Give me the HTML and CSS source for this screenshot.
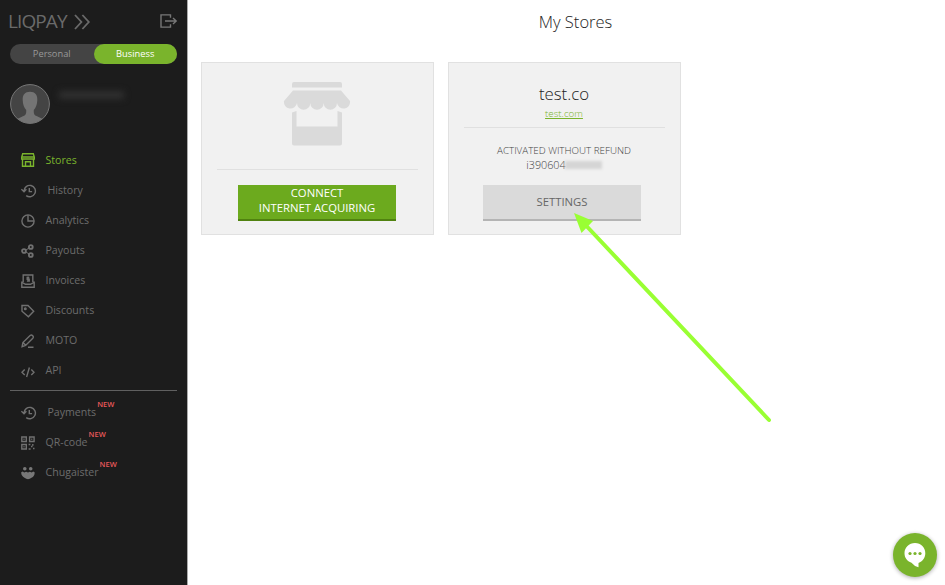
FILE: index.html
```html
<!DOCTYPE html>
<html lang="en">
<head>
<meta charset="utf-8">
<title>My Stores</title>
<link rel="stylesheet" href="styles.css">
</head>
<body>
<svg class="symbols" aria-hidden="true">
  <symbol id="history" viewBox="0 0 16 14"><path d="M3 7a5.7 5.7 0 1 1 2.2 4.6M.4 5.2 3 7.8 5.4 5.2M8.3 4v3.6h2.8"/></symbol>
</svg>
<div class="app">
  <aside class="sidebar">
    <header class="brand">
      <span class="logo">LIQPAY</span>
      <svg class="chevrons" width="17" height="16" viewBox="0 0 17 16"><path d="M1 1l6.4 7L1 15M8.4 1l6.4 7-6.4 7"/></svg>
      <svg class="logout" width="18" height="14" viewBox="0 0 18 14"><path d="M10.5 3.8V.9H1v12.2h9.5v-2.900M5 7h11M13 4l3.2 3L13 10"/></svg>
    </header>
    <div class="switch"><span>Personal</span><span class="on">Business</span></div>
    <div class="profile">
      <svg width="40" height="40" viewBox="0 0 40 40"><circle cx="20" cy="20" r="19.4" fill="#444" stroke="#777"/><path fill="#747474" d="M20 7.800c5 0 7.500 3 7.300 8.200-.1 4.800-1.600 8-3.500 9.900-.2 3.800.4 5 2.800 6.200l5.600 2.600Q27 39.300 20 39.300T7.800 34.700l5.600-2.600c2.400-1.200 3-2.400 2.800-6.200-1.900-1.900-3.400-5.100-3.500-9.900C12.500 10.800 15 7.800 20 7.800z"/></svg>
      <span class="phone"></span>
    </div>
    <nav class="menu">
      <a class="item active"><svg width="14" height="14" viewBox="0 0 14 14"><path d="M1.700.8h10.600L13.300 4v2H.7V4zM1 4h12M1.500 6v7.300h11V6M4.500 13V8.700h5V13"/></svg><span>Stores</span></a>
      <a class="item wide"><svg width="16" height="14"><use href="#history"/></svg><span>History</span></a>
      <a class="item"><svg width="14" height="14" viewBox="0 0 14 14"><circle cx="7" cy="7" r="6.100"/><path d="M7 1v6h6"/></svg><span>Analytics</span></a>
      <a class="item payouts"><svg width="14" height="14" viewBox="0 0 14 14"><circle cx="3" cy="7" r="1.900"/><circle cx="9.800" cy="3" r="1.900"/><circle cx="9.800" cy="11" r="1.900"/><path class="joint" d="M5 6l3-2M5 8l3 2"/></svg><span>Payouts</span></a>
      <a class="item"><svg width="14" height="14" viewBox="0 0 14 14"><path d="M2.200 8V1h9.600v7M.8 7.500v5.700h12.400V7.500M1 8.300l3.500 2h5l3.500-2M8.300 3.500H6.200v1.700h2v1.900H5.900M7.100 2.600v5.200"/></svg><span>Invoices</span></a>
      <a class="item"><svg width="14" height="14" viewBox="0 0 14 14"><path d="M1 1.500h6l5.700 5.700-5.300 5.600L1 7.200z"/><circle cx="4.300" cy="4.700" r=".8"/></svg><span>Discounts</span></a>
      <a class="item"><svg width="14" height="14" viewBox="0 0 14 14"><path d="M1.100 12.700l.8-4.200 7.200-7q1.400-1 2.600.2t.1 2.500L4.600 11.500zM2 8.500l2.700 2.700M7 13.200h5.500"/></svg><span>MOTO</span></a>
      <a class="item"><svg class="low" width="14" height="14" viewBox="0 0 14 14"><path d="M3.700 4.500L1 7.300l2.700 2.800M10.300 4.500L13 7.300l-2.700 2.800M8.400 2.500l-2.800 9.500"/></svg><span>API</span></a>
    </nav>
    <nav class="menu extra">
      <a class="item wide"><svg width="16" height="14"><use href="#history"/></svg><span>Payments</span><sup>NEW</sup></a>
      <a class="item"><svg width="14" height="14" viewBox="0 0 14 14"><path d="M.8 1h4.500v4.500H.8zM8.600 1h4.500v4.500H8.600zM.8 8.500h4.500V13H.8zM2.500 3.300h1M10.300 3.300h1M2.500 10.800h1M7.600 8.500h1.800M10 10.500h1.500M11.800 8v1.800M7.600 13h2M12 12.500h1.500"/></svg><span>QR-code</span><sup>NEW</sup></a>
      <a class="item"><svg class="solid" width="14" height="14" viewBox="0 0 14 14"><circle cx="3.800" cy="2.800" r="1.800"/><circle cx="9.700" cy="2.800" r="1.800"/><path d="M.2 6.200l1.500-.7 1.500 1 1.900-.8 1.900.8 1.900-.8 1.900.8 1.300-1 1.500.7Q14 10 10.500 11.800 7 14.500 3.500 11.800 0 10 .2 6.200z"/></svg><span>Chugaister</span><sup>NEW</sup></a>
    </nav>
  </aside>
  <main class="content">
    <h1>My Stores</h1>
    <div class="cards">
      <section class="card connect">
        <svg class="shop" width="68" height="64" viewBox="0 0 68 64"><path d="M11 0h46q2 0 2 2v3.500H9V2q0-2 2-2zM10 8.500h48l9 10.500a6.500 6.500 0 0 1-13 2 6.500 6.500 0 0 1-13.300 0 6.500 6.500 0 0 1-13.400 0 6.500 6.500 0 0 1-13.300 0 6.500 6.500 0 0 1-13-2zM9 30.500l4.500-1.500v15.500h41V29l4.500 1.500v31q0 2-2 2H11q-2 0-2-2z"/></svg>
        <hr>
        <button class="primary">CONNECT<br>INTERNET ACQUIRING</button>
      </section>
      <section class="card store">
        <h2>test.co</h2>
        <a class="link">test.com</a>
        <hr>
        <p class="status">ACTIVATED WITHOUT REFUND</p>
        <p class="ident">i390604<span class="mask"></span></p>
        <button>SETTINGS</button>
      </section>
    </div>
  </main>
</div>
<svg class="arrow" width="200" height="212" viewBox="0 0 200 212"><path d="M12 12.500L195 207" stroke="#9f3" stroke-width="4" stroke-linecap="round"/><path d="M0 0l19 8L7.500 20z" fill="#9f3"/></svg>
<div class="chat"><svg width="22" height="25" viewBox="0 0 22 25"><path fill="#fff" d="M11 0C17 0 21.300 4.500 21.300 10.200c0 4.500-2.800 8.200-6.800 9.800v4.200Q10 23 7.500 19.700C3 18.300.5 14.600.5 10.200.5 4.500 5 0 11 0z"/><g fill="#7ab42c"><circle cx="6" cy="10.500" r="1.600"/><circle cx="11" cy="10.500" r="1.600"/><circle cx="16" cy="10.500" r="1.600"/></g></svg></div>
</body>
</html>
```
FILE: styles.css
```css
* { box-sizing: border-box; }
body {
  margin: 0;
  font-family: "Open Sans", "Noto Sans", sans-serif;
  font-weight: 300;
  background: #fff;
  overflow: hidden;
}
.symbols { position: absolute; width: 0; height: 0; }
.app { display: flex; height: 585px; }
.sidebar {
  width: 188px;
  flex: none;
  padding: 9px 10px 0;
  background: #1c1c1c;
  border-right: 1px solid #aaa;
}
.brand { display: flex; align-items: center; height: 25px; color: #6a6a6a; }
.logo { font-size: 19px; font-weight: 400; line-height: 25px; width: 65px; margin-left: -2px; letter-spacing: -.9px; white-space: nowrap; }
.chevrons, .logout { fill: none; stroke: #6a6a6a; stroke-width: 1.8; }
.chevrons { margin-left: 1px; }
.logout { margin: -2px -1px 0 auto; stroke-width: 1.4; stroke: #777; }
.switch {
  display: flex;
  width: 167px;
  height: 20px;
  margin-top: 10px;
  border-radius: 10px;
  background: #444;
  font-size: 9.3px;
  line-height: 20px;
  font-weight: 400;
  text-align: center;
  color: #999;
}
.switch span { flex: 1; }
.switch .on { border-radius: 10px; background: #7ab42c; color: #fff; }
.profile { display: flex; height: 40px; margin-top: 20px; }
.phone { width: 65px; height: 8px; margin: 7px 0 0 9px; background: #303030; filter: blur(3px); }
.menu { padding: 0 0 5px 11px; margin-top: 21px; }
.item { display: flex; align-items: center; height: 30px; font-size: 10.600px; color: #6c6c6c; }
.item svg { margin: 1px 10.500px 0 0; fill: none; stroke: #707070; stroke-width: 1.4; flex: none; }
.item span { font-weight: 400; line-height: 14px; margin-bottom: 1px; }
.item .low { position: relative; top: 1px; }
.active { color: #7ab42c; }
.item.active svg { stroke: #7ab42c; margin-top: 0; }
.item .solid { fill: #777; stroke: none; }
.payouts svg { stroke-width: 1.9; }
.joint { stroke-width: 1; }
.item sup { align-self: flex-start; margin: 2px 0 0 1px; color: #e8585a; font-size: 7.500px; line-height: 10px; font-weight: 600; }
.extra { margin: 0; padding-top: 6px; border-top: 1px solid #606060; }
.content { flex: 1; padding: 0 13px; }
h1, h2, p { margin: 0; font-weight: 300; }
h1 { height: 62px; padding: 9px 0 0 18px; font-size: 16.500px; line-height: 26px; text-align: center; color: #222; }
.cards { display: flex; gap: 14px; }
.card {
  display: flex;
  flex-direction: column;
  align-items: center;
  width: 233px;
  height: 173px;
  padding-right: 1px;
  border: 1px solid #e1e1e1;
  background: #f1f1f1;
}
.shop { fill: #dadada; margin-top: 19px; }
hr { width: 201px; height: 1px; margin: 0; border: 0; background: #e0e0e0; }
.connect hr { margin-top: 23px; }
button {
  width: 158px;
  height: 36px;
  margin-top: auto;
  margin-bottom: 13px;
  padding: 0 0 2px;
  border: 0;
  border-bottom: 2px solid #b4b4b4;
  background: #dadada;
  font: 400 11.300px/15px "Open Sans", sans-serif;
  color: #666;
}
.primary { background: #6caa1e; border-color: #508210; color: #fff; padding-bottom: 4px; }
.store button { margin-right: 4px; }
h2 { margin-top: 18px; font-size: 16.800px; line-height: 26px; color: #222; }
.link { font-size: 9.800px; line-height: 13px; color: #7ab42c; text-decoration: underline; }
.store hr { margin-top: 7px; }
.status { margin-top: 16px; font-size: 9.800px; line-height: 14px; color: #444; }
.ident { display: flex; align-items: center; margin-top: -1px; font-size: 10.800px; line-height: 15px; color: #444; }
.mask { width: 37px; height: 8px; margin-left: -1px; background: #d5d5d5; filter: blur(1.500px); }
.arrow { position: absolute; left: 574px; top: 213px; fill: none; overflow: visible; }
.chat {
  position: absolute;
  left: 893px;
  top: 533px;
  width: 44px;
  height: 44px;
  display: flex;
  align-items: center;
  justify-content: center;
  border-radius: 50%;
  background: #7ab42c;
  box-shadow: 0 1px 4px #0005;
}
```
